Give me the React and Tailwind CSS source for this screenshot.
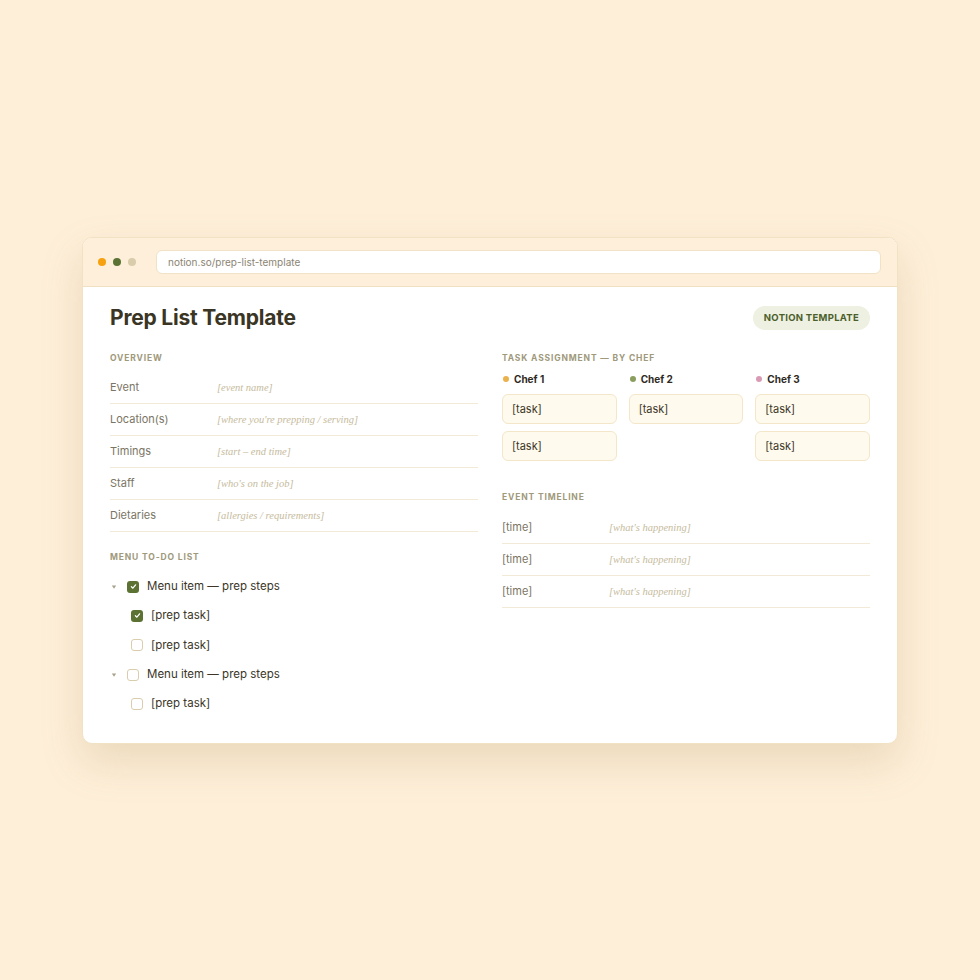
import React from "react";

const sans = { fontFamily: "Inter, 'Open Sans', 'Liberation Sans', sans-serif" };
const serif = { fontFamily: "'Liberation Serif', 'DejaVu Serif', serif" };

function Check() {
  return (
    <svg width="7" height="7" viewBox="0 0 10 10" fill="none">
      <path d="M2 5.4 L4.1 7.4 L8 2.6" stroke="#fff" strokeWidth="1.8" strokeLinecap="round" strokeLinejoin="round" />
    </svg>
  );
}

function Box({ checked }) {
  return checked ? (
    <span className="flex h-[12px] w-[12px] items-center justify-center rounded-[3px] bg-[#5b7233]">
      <Check />
    </span>
  ) : (
    <span className="h-[12px] w-[12px] rounded-[3px] border border-[#d9cdac] bg-white" />
  );
}

function Caret() {
  return (
    <svg width="6" height="6" viewBox="0 0 6 6" className="mt-[1px]">
      <path d="M0.8 1.5 L5.2 1.5 L3 4.8 Z" fill="#a8a28c" />
    </svg>
  );
}

function Heading({ children }) {
  return (
    <div className="h-[12px] text-[8.5px] font-bold uppercase leading-[12px] tracking-[0.1em] text-[#a0997b]">
      {children}
    </div>
  );
}

function FieldRow({ label, value }) {
  return (
    <div className="flex h-[32px] items-center border-b border-[#f3e9d7]">
      <span className="w-[107px] shrink-0 text-[11px] text-[#7b7565]">{label}</span>
      <span className="text-[10.5px] italic text-[#c6bb9d]" style={serif}>
        {value}
      </span>
    </div>
  );
}

const overview = [
  ["Event", "[event name]"],
  ["Location(s)", "[where you're prepping / serving]"],
  ["Timings", "[start – end time]"],
  ["Staff", "[who's on the job]"],
  ["Dietaries", "[allergies / requirements]"],
];

const chefs = [
  { name: "Chef 1", dot: "bg-[#ebb14c]", tasks: 2 },
  { name: "Chef 2", dot: "bg-[#8a9e5e]", tasks: 1 },
  { name: "Chef 3", dot: "bg-[#d99ab4]", tasks: 2 },
];

export default function App() {
  return (
    <div className="min-h-[980px] w-full bg-[#feefd9] pt-[237px]" style={sans}>
      <div className="ml-[82px] w-[816px] overflow-hidden rounded-[10px] border border-[#f1e2c4] bg-white shadow-[0_18px_40px_rgba(170,140,80,0.22)]">
        {/* browser chrome */}
        <div className="flex h-[49px] items-center gap-[20px] border-b border-[#efe0c3] bg-[#fdefd9] pl-[15px] pr-[16px]">
          <div className="flex items-center gap-[7px]">
            <span className="h-[8px] w-[8px] rounded-full bg-[#f6a10f]" />
            <span className="h-[8px] w-[8px] rounded-full bg-[#5a7233]" />
            <span className="h-[8px] w-[8px] rounded-full bg-[#d8ccab]" />
          </div>
          <div className="flex h-[24px] flex-1 items-center rounded-[6px] border border-[#efe2c6] bg-white px-[11px] text-[10px] text-[#8b8472]">
            notion.so/prep-list-template
          </div>
        </div>

        {/* page */}
        <div className="px-[27px] pb-[25px] pt-[19px]">
          <div className="flex h-[24px] items-center justify-between">
            <h1 className="text-[21px] font-bold leading-[24px] tracking-[-0.01em] text-[#3a3524]">
              Prep List Template
            </h1>
            <span className="flex h-[24px] items-center rounded-full bg-[#eef0e1] px-[11px] text-[9.5px] font-bold tracking-[0.03em] text-[#4b5f2a]">
              NOTION TEMPLATE
            </span>
          </div>

          <div className="mt-[22px] grid grid-cols-2 gap-x-[24px]">
            {/* left column */}
            <div>
              <Heading>Overview</Heading>
              <div className="mt-[8px]">
                {overview.map(([l, v]) => (
                  <FieldRow key={l} label={l} value={v} />
                ))}
              </div>

              <div className="mt-[19px]">
                <Heading>Menu to-do list</Heading>
              </div>
              <div className="mt-[9px] text-[11.5px] text-[#3b3627]">
                <div className="flex h-[29.3px] items-center">
                  <span className="w-[17px] pl-[1px]"><Caret /></span>
                  <Box checked />
                  <span className="ml-[8px]">Menu item — prep steps</span>
                </div>
                <div className="flex h-[29.3px] items-center pl-[21px]">
                  <Box checked />
                  <span className="ml-[8px]">[prep task]</span>
                </div>
                <div className="flex h-[29.3px] items-center pl-[21px]">
                  <Box />
                  <span className="ml-[8px]">[prep task]</span>
                </div>
                <div className="flex h-[29.3px] items-center">
                  <span className="w-[17px] pl-[1px]"><Caret /></span>
                  <Box />
                  <span className="ml-[8px]">Menu item — prep steps</span>
                </div>
                <div className="flex h-[29.3px] items-center pl-[21px]">
                  <Box />
                  <span className="ml-[8px]">[prep task]</span>
                </div>
              </div>
            </div>

            {/* right column */}
            <div>
              <Heading>Task assignment — by chef</Heading>
              <div className="mt-[9px] grid grid-cols-3 gap-x-[12px]">
                {chefs.map((c) => (
                  <div key={c.name}>
                    <div className="flex h-[12px] items-center gap-[5px] pl-[1px]">
                      <span className={`h-[6px] w-[6px] rounded-full ${c.dot}`} />
                      <span className="text-[10px] font-bold text-[#2f2a1e]">{c.name}</span>
                    </div>
                    <div className="mt-[9px] flex flex-col gap-[7px]">
                      {Array.from({ length: c.tasks }).map((_, i) => (
                        <div
                          key={i}
                          className="flex h-[30px] items-center rounded-[6px] border border-[#f3e6c9] bg-[#fffaee] px-[9px] text-[11px] text-[#3b3627]"
                        >
                          [task]
                        </div>
                      ))}
                    </div>
                  </div>
                ))}
              </div>

              <div className="mt-[30px]">
                <Heading>Event timeline</Heading>
              </div>
              <div className="mt-[9px]">
                {[0, 1, 2].map((i) => (
                  <FieldRow key={i} label="[time]" value="[what's happening]" />
                ))}
              </div>
            </div>
          </div>
        </div>
      </div>
    </div>
  );
}
